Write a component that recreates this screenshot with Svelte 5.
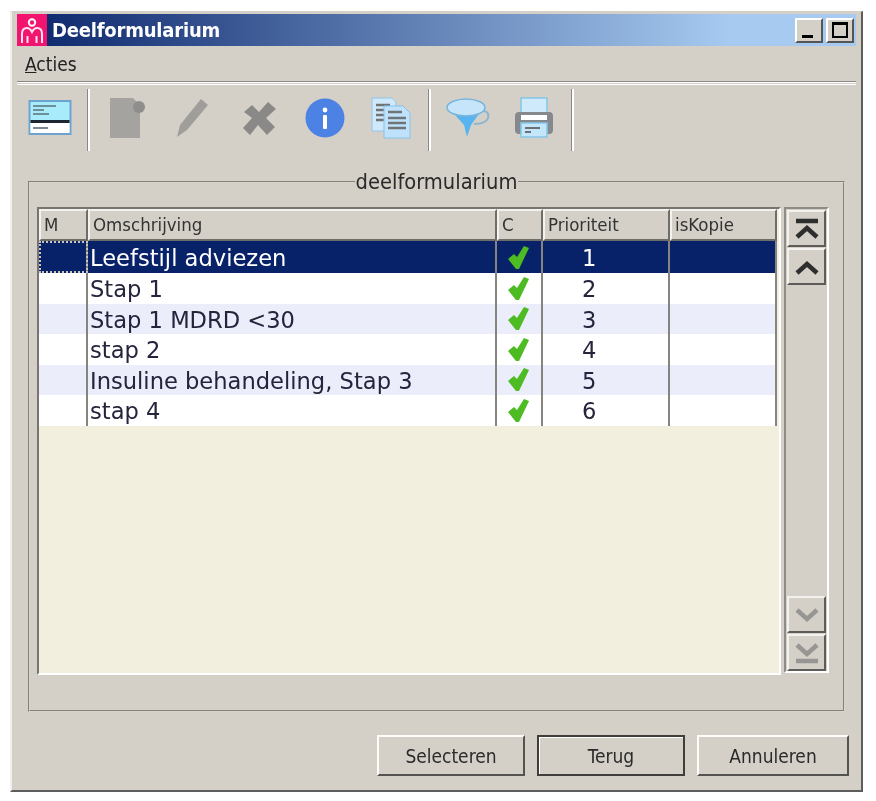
<script lang="ts">
	const rows = [
		{ name: 'Leefstijl adviezen', prio: 1 },
		{ name: 'Stap 1', prio: 2 },
		{ name: 'Stap 1 MDRD <30', prio: 3 },
		{ name: 'stap 2', prio: 4 },
		{ name: 'Insuline behandeling, Stap 3', prio: 5 },
		{ name: 'stap 4', prio: 6 }
	];
</script>

<div class="window">
	<div class="titlebar">
		<span class="logo">
			<svg width="30" height="30" viewBox="0 0 30 30">
				<circle cx="15" cy="7.5" r="3.2" fill="none" stroke="#fff" stroke-width="2" />
				<path d="M5 28V19Q5 13 10 13Q13 13 15 17Q17 13 20 13Q25 13 25 19V28M10.5 28V21M19.5 28V21" fill="none" stroke="#ffe4ef" stroke-width="2" />
			</svg>
		</span>
		<span class="title">Deelformularium</span>
		<span class="spacer"></span>
		<button class="winbtn"><span class="min"></span></button>
		<button class="winbtn"><span class="max"></span></button>
	</div>

	<div class="menubar"><span class="menu"><u>A</u>cties</span></div>

	<div class="toolbar">
		<span class="tool">
			<svg width="44" height="38" viewBox="0 0 44 38">
				<rect x="1.5" y="2" width="41" height="33" fill="#a8ecfb" stroke="#6fa3cf" stroke-width="2" />
				<path d="M5 7H28M5 11H16M5 15H21" stroke="#6d8f9c" stroke-width="2" />
				<rect x="2.5" y="21" width="39" height="3" fill="#1d2530" />
				<rect x="2.5" y="24" width="39" height="10" fill="#fff" />
				<path d="M5 29H20" stroke="#7b8890" stroke-width="2" />
			</svg>
		</span>
		<span class="sep"></span>
		<span class="tool">
			<svg width="38" height="42" viewBox="0 0 38 42">
				<path d="M2 1H25L32 8V41H2Z" fill="#a5a3a0" />
				<circle cx="31" cy="10" r="6" fill="#8f8e8c" />
			</svg>
		</span>
		<span class="tool">
			<svg width="34" height="40" viewBox="0 0 34 40">
				<path d="M25 1L32 7L11 32L1 39L4 27Z" fill="#a09e9b" />
			</svg>
		</span>
		<span class="tool">
			<svg width="36" height="36" viewBox="0 0 36 36">
				<path d="M3 12L11 5L18 12L27 2L35 9L25 18L34 27L26 35L17 25L9 35L2 28L11 18Z" fill="#8b8987" />
			</svg>
		</span>
		<span class="tool">
			<svg width="40" height="40" viewBox="0 0 40 40">
				<circle cx="20" cy="20" r="19.5" fill="#4c82e4" />
				<rect x="18" y="17" width="4" height="14" rx="1" fill="#fff" />
				<circle cx="20" cy="12" r="2.4" fill="#fff" />
			</svg>
		</span>
		<span class="tool">
			<svg width="42" height="42" viewBox="0 0 42 42">
				<path d="M2 1H22L26 5V34H2Z" fill="#cfe9fb" stroke="#92c6ea" />
				<path d="M6 8H20M6 13H20M6 18H20M6 23H14" stroke="#6f7477" stroke-width="2.4" />
				<path d="M14 9H33L40 16V41H14Z" fill="#bfe2fa" stroke="#86c3ea" />
				<path d="M18 15H32M18 21H36M18 26H36M18 31H36" stroke="#6f7477" stroke-width="2.4" />
			</svg>
		</span>
		<span class="sep"></span>
		<span class="tool">
			<svg width="44" height="40" viewBox="0 0 44 40">
				<path d="M34 13Q44 12 42 20Q40 26 28 26" fill="none" stroke="#8db4cf" stroke-width="2" />
				<path d="M2 9L18 27L21 39L25 27L38 9Z" fill="#57b4f0" />
				<ellipse cx="20" cy="9.5" rx="19" ry="8.5" fill="#c6e5fb" stroke="#78b5dd" stroke-width="1.5" />
			</svg>
		</span>
		<span class="tool">
			<svg width="40" height="42" viewBox="0 0 40 42">
				<rect x="7" y="1" width="26" height="20" fill="#cfeafb" stroke="#86c6e6" stroke-width="1.5" />
				<rect x="1" y="15" width="38" height="22" rx="4" fill="#85888d" />
				<rect x="7" y="18" width="26" height="5" fill="#fff" />
				<rect x="7" y="26" width="26" height="14" fill="#c4e6fa" stroke="#86c6e6" stroke-width="1.5" />
				<path d="M11 31H26M11 35H17" stroke="#6c7074" stroke-width="2" />
			</svg>
		</span>
		<span class="sep"></span>
	</div>

	<fieldset class="group">
		<legend>deelformularium</legend>
		<div class="group-body">
			<div class="table">
				<div class="row header">
					<div class="th">M</div>
					<div class="th">Omschrijving</div>
					<div class="th">C</div>
					<div class="th">Prioriteit</div>
					<div class="th">isKopie</div>
				</div>
				{#each rows as row, i}
					<div class="row item" class:selected={i === 0} class:odd={i % 2 === 0 && i > 0}>
						<div class="td" class:focus={i === 0}></div>
						<div class="td name">{row.name}</div>
						<div class="td check">
							<svg width="21" height="23" viewBox="0 0 21 23">
								<path d="M0 13L6 8L9 11L16 0L21 2L11 23H8Z" fill="#4dbb22" />
							</svg>
						</div>
						<div class="td prio">{row.prio}</div>
						<div class="td"></div>
					</div>
				{/each}
			</div>

			<div class="scroller">
				<button class="scrollbtn">
					<svg width="26" height="22" viewBox="0 0 26 22"><path d="M2 3H24M3 19L13 10L23 19" fill="none" stroke="#2e2e2e" stroke-width="4.5" /></svg>
				</button>
				<button class="scrollbtn">
					<svg width="26" height="22" viewBox="0 0 26 22"><path d="M3 17L13 8L23 17" fill="none" stroke="#2e2e2e" stroke-width="4.5" /></svg>
				</button>
				<span class="spacer"></span>
				<button class="scrollbtn">
					<svg width="26" height="22" viewBox="0 0 26 22"><path d="M3 6L13 15L23 6" fill="none" stroke="#989693" stroke-width="4.5" /></svg>
				</button>
				<button class="scrollbtn">
					<svg width="26" height="22" viewBox="0 0 26 22"><path d="M3 3L13 12L23 3M2 19H24" fill="none" stroke="#989693" stroke-width="4.5" /></svg>
				</button>
			</div>
		</div>
	</fieldset>

	<div class="actions">
		<button class="action">Selecteren</button>
		<button class="action default">Terug</button>
		<button class="action">Annuleren</button>
	</div>
</div>

<style>
	:global(body) {
		background: #fff;
	}

	.window {
		box-sizing: border-box;
		width: 853px;
		height: 781px;
		margin: 11px 0 0 10px;
		padding: 2px 5px 0 5px;
		background: #d4d0c8;
		border-top: 1px solid #d4d0c8;
		border-left: 2px solid #f2f0ec;
		border-right: 2px solid #5d5d5d;
		border-bottom: 2px solid #5d5d5d;
		font-family: 'DejaVu Sans Condensed', 'DejaVu Sans', sans-serif;
		font-stretch: condensed;
		color: #222;
		filter: blur(0.5px);
	}

	.titlebar {
		display: flex;
		align-items: center;
		height: 32px;
		padding-right: 2px;
		background: linear-gradient(90deg, #0a246a 0%, #a6caf0 85%, #a6caf0 100%);
	}

	.logo {
		display: flex;
		width: 30px;
		height: 32px;
		align-items: center;
		background: #f2146f;
	}

	.title {
		margin-left: 5px;
		font-weight: 700;
		font-size: 20px;
		letter-spacing: -0.2px;
		color: #fff;
	}

	.spacer {
		flex: 1;
	}

	.winbtn {
		display: block;
		position: relative;
		box-sizing: border-box;
		width: 28px;
		height: 25px;
		margin-left: 3px;
		padding: 0;
		background: #d4d0c8;
		border: 2px solid;
		border-color: #fff #555 #555 #fff;
	}

	.min {
		position: absolute;
		left: 5px;
		bottom: 3px;
		width: 11px;
		height: 3px;
		background: #000;
	}

	.max {
		position: absolute;
		left: 4px;
		top: 2px;
		box-sizing: border-box;
		width: 16px;
		height: 16px;
		border: 2px solid #000;
		border-top-width: 3px;
	}

	.menubar {
		height: 36px;
		padding-left: 8px;
		display: flex;
		align-items: center;
		border-bottom: 3px double #fff;
		box-shadow: inset 0 -1px 0 #8a8884;
		box-sizing: content-box;
	}

	.menu {
		font-size: 19px;
	}

	.toolbar {
		display: flex;
		align-items: center;
		height: 84px;
		padding-bottom: 18px;
		box-sizing: border-box;
	}

	.tool {
		display: flex;
		justify-content: center;
		align-items: center;
		width: 66px;
		flex: none;
	}

	.sep {
		flex: none;
		width: 2px;
		height: 62px;
		margin: 4px 4px 0 5px;
		background: #fff;
		box-shadow: -1px 0 0 #8a8884;
	}

	.group {
		box-sizing: border-box;
		width: 817px;
		height: 543px;
		margin: 0 0 0 11px;
		padding: 12px 7px 0 7px;
		border: 2px groove #d8d4cc;
		min-width: 0;
	}

	.group legend {
		margin: 0 auto;
		padding: 0 1px;
		font-size: 21.7px;
		line-height: 26px;
		color: #2a2a2a;
	}

	.group-body {
		display: flex;
		gap: 3px;
		height: 468px;
	}

	.table {
		box-sizing: border-box;
		width: 744px;
		background: #f3efdf;
		border: 2px solid;
		border-color: #77756f #fff #fff #77756f;
	}

	.row {
		display: grid;
		width: 738px;
		grid-template-columns: 49px 409px 46px 127px 107px;
		font-family: 'DejaVu Sans', sans-serif;
		font-stretch: normal;
	}

	.header {
		height: 32px;
	}

	.th {
		box-sizing: border-box;
		padding-left: 3px;
		background: #d4d0c8;
		border: 2px solid;
		border-color: #f4f2ee #6f6d68 #6f6d68 #f4f2ee;
		font-family: 'DejaVu Sans Condensed', 'DejaVu Sans', sans-serif;
		font-stretch: condensed;
		font-size: 18.5px;
		line-height: 27px;
		color: #333;
		white-space: nowrap;
		overflow: hidden;
	}

	.item {
		height: 30.5px;
		background: #fff;
		font-size: 22.6px;
		color: #24243c;
	}

	.item.odd {
		background: #ecedfb;
	}

	.item.selected {
		height: 32px;
		background: #072268;
		color: #fff;
	}

	.td {
		box-sizing: border-box;
		display: flex;
		align-items: center;
		border-right: 2px solid #85847f;
		overflow: hidden;
	}

	.td.focus {
		outline: 2px dotted #c9c6bc;
		outline-offset: -2px;
	}

	.name {
		padding: 2px 0 0 2px;
		white-space: nowrap;
	}

	.check {
		justify-content: center;
		padding-right: 2px;
	}

	.prio {
		padding: 2px 0 0 39px;
	}

	.scroller {
		box-sizing: border-box;
		display: flex;
		flex-direction: column;
		width: 45px;
		height: 466px;
		padding: 1px 1px 0 1px;
		gap: 1px;
		border: 2px solid;
		border-color: #8e8c87 #fff #fff #8e8c87;
	}

	.scrollbtn {
		display: flex;
		align-items: center;
		justify-content: center;
		box-sizing: border-box;
		flex: none;
		height: 37px;
		padding: 0;
		background: #d4d0c8;
		border: 2px solid;
		border-color: #f4f2ee #5e5c58 #5e5c58 #f4f2ee;
	}

	.actions {
		display: flex;
		justify-content: flex-end;
		gap: 12px;
		margin-top: 23px;
		margin-right: 7px;
	}

	.action {
		box-sizing: border-box;
		width: 148px;
		height: 41px;
		padding: 0;
		background: #d4d0c8;
		border: 2px solid;
		border-color: #fdfcfa #55534f #55534f #fdfcfa;
		font-family: 'DejaVu Sans Condensed', 'DejaVu Sans', sans-serif;
		font-stretch: condensed;
		font-size: 19px;
		color: #2a2a2a;
	}

	.action:last-child {
		width: 152px;
	}

	.action.default {
		border-color: #3f3e3b;
		box-shadow: inset 1px 1px 0 #fff;
	}
</style>
